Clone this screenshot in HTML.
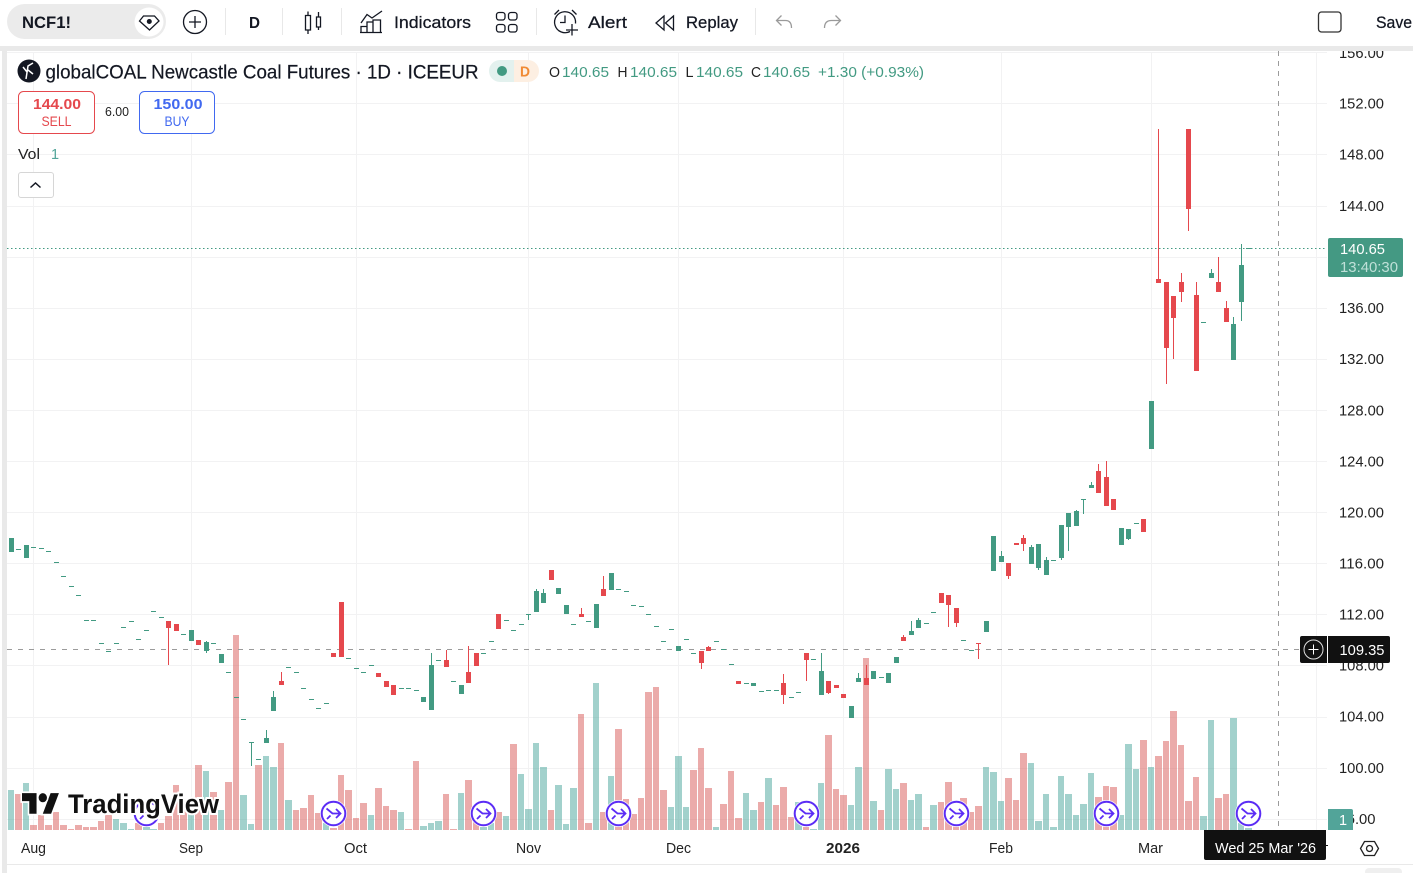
<!DOCTYPE html>
<html lang="en"><head><meta charset="utf-8"><title>NCF1! chart</title>
<style>
html,body{margin:0;padding:0;background:#fff;width:1413px;height:873px;overflow:hidden}
svg{display:block;font-family:"Liberation Sans",sans-serif}
.c{shape-rendering:crispEdges}
.t{fill:#131722;font-size:16.5px;stroke:#131722;stroke-width:.25px}
.p{fill:#222;font-size:14.5px}
.a{fill:#222;font-size:14.5px}
.g{fill:#429a82;font-size:14.5px}
.k{fill:#222;font-size:14.5px}
.i{fill:none;stroke:#131722;stroke-width:1.3}
</style></head><body>
<svg width="1413" height="873" viewBox="0 0 1413 873" xmlns="http://www.w3.org/2000/svg">
<defs>
<clipPath id="axis"><rect x="1328" y="51" width="85" height="790"/></clipPath>
<g id="mk"><circle r="13.5" fill="#fff"/><circle r="11.8" fill="#fff" stroke="#5b2cf5" stroke-width="2"/><path d="M-7-5L-1 0H7M2.5-4.5L7 0 2.500 4.500M-6.500 5.500L-3 2" fill="none" stroke="#5b2cf5" stroke-width="1.800"/></g>
</defs>
<rect width="1413" height="873" fill="#fff"/>
<rect x="0" y="46" width="1413" height="5" fill="#e9e9e9"/>
<rect x="2" y="46" width="5" height="827" fill="#e9e9e9"/>
<path d="M1410 46v5h3v-5z" fill="#e9e9e9"/>

<!-- grid -->
<path class="c" fill="none" stroke="#f2f2f3" stroke-width="1" d="M7 52.500H1327M7 103.500H1327M7 154.500H1327M7 206.500H1327M7 257.500H1327M7 308.500H1327M7 359.500H1327M7 410.500H1327M7 461.500H1327M7 512.500H1327M7 563.500H1327M7 614.500H1327M7 665.500H1327M7 717.500H1327M7 768.500H1327M7 819.500H1327M33.500 52V830M191.500 52V830M356.500 52V830M528.500 52V830M678.500 52V830M843.500 52V830M1001.500 52V830M1151.500 52V830M1316.500 52V830"/>
<path class="c" fill="none" stroke="#e9e9e9" stroke-width="1" d="M7 864.500H1413"/>
<rect x="1365" y="868" width="37" height="8" rx="4" fill="#efefef"/>

<!-- volume teal -->
<path class="c" fill="#45a399" fill-opacity=".5" d="M8 790h6V830h-6zM23 783h6V830h-6zM113 819h6V830h-6zM120 823h7V830h-7zM128 829h6V830h-6zM143 827h7V830h-7zM150 829h7V830h-7zM188 813h6V830h-6zM203 771h6V830h-6zM218 810h6V830h-6zM240 795h7V830h-7zM248 824h6V830h-6zM263 756h6V830h-6zM270 767h7V830h-7zM285 800h7V830h-7zM323 823h6V830h-6zM368 815h6V830h-6zM398 812h6V830h-6zM420 826h7V830h-7zM428 823h6V830h-6zM435 821h7V830h-7zM458 793h6V830h-6zM480 827h7V830h-7zM488 823h6V830h-6zM503 816h6V830h-6zM518 774h6V830h-6zM525 809h7V830h-7zM533 743h6V830h-6zM540 767h7V830h-7zM555 785h7V830h-7zM563 824h6V830h-6zM570 788h7V830h-7zM593 683h6V830h-6zM608 776h6V830h-6zM668 807h6V830h-6zM675 756h7V830h-7zM683 807h6V830h-6zM713 827h6V830h-6zM743 793h6V830h-6zM750 810h7V830h-7zM765 778h7V830h-7zM795 802h7V830h-7zM810 829h7V830h-7zM818 783h6V830h-6zM848 805h6V830h-6zM855 767h7V830h-7zM870 801h7V830h-7zM885 769h7V830h-7zM893 789h6V830h-6zM908 800h6V830h-6zM915 794h7V830h-7zM930 805h7V830h-7zM983 767h6V830h-6zM990 772h7V830h-7zM998 801h6V830h-6zM1028 763h6V830h-6zM1035 821h7V830h-7zM1043 794h6V830h-6zM1050 827h7V830h-7zM1058 776h6V830h-6zM1065 794h7V830h-7zM1073 815h6V830h-6zM1080 804h7V830h-7zM1088 773h6V830h-6zM1118 815h6V830h-6zM1125 744h7V830h-7zM1133 769h6V830h-6zM1148 767h6V830h-6zM1200 816h7V830h-7zM1208 720h6V830h-6zM1230 718h7V830h-7zM1238 823h6V830h-6zM1245 828h7V830h-7z"/>
<!-- volume pink -->
<path class="c" fill="#d75755" fill-opacity=".5" d="M15 794h7V830h-7zM30 825h7V830h-7zM38 815h6V830h-6zM45 825h7V830h-7zM53 812h6V830h-6zM60 825h7V830h-7zM68 829h6V830h-6zM75 825h7V830h-7zM83 827h6V830h-6zM90 827h7V830h-7zM98 821h6V830h-6zM105 815h7V830h-7zM135 823h7V830h-7zM158 823h6V830h-6zM165 816h7V830h-7zM173 785h6V830h-6zM180 810h7V830h-7zM195 765h7V830h-7zM210 792h7V830h-7zM225 782h7V830h-7zM233 635h6V830h-6zM255 765h7V830h-7zM278 743h6V830h-6zM293 810h6V830h-6zM300 808h7V830h-7zM308 795h6V830h-6zM315 813h7V830h-7zM330 828h7V830h-7zM338 775h6V830h-6zM345 790h7V830h-7zM353 818h6V830h-6zM360 803h7V830h-7zM375 788h7V830h-7zM383 806h6V830h-6zM390 810h7V830h-7zM405 829h7V830h-7zM413 761h6V830h-6zM443 794h6V830h-6zM450 829h7V830h-7zM465 780h7V830h-7zM473 817h6V830h-6zM495 812h7V830h-7zM510 744h7V830h-7zM548 810h6V830h-6zM578 714h6V830h-6zM585 823h7V830h-7zM600 812h7V830h-7zM615 729h7V830h-7zM623 799h6V830h-6zM630 814h7V830h-7zM638 798h6V830h-6zM645 692h7V830h-7zM653 687h6V830h-6zM660 790h7V830h-7zM690 770h7V830h-7zM698 748h6V830h-6zM705 788h7V830h-7zM720 804h7V830h-7zM728 771h6V830h-6zM735 818h7V830h-7zM758 802h6V830h-6zM773 805h6V830h-6zM780 787h7V830h-7zM788 817h6V830h-6zM803 827h6V830h-6zM825 735h7V830h-7zM833 789h6V830h-6zM840 795h7V830h-7zM863 658h6V830h-6zM878 810h6V830h-6zM900 783h7V830h-7zM923 827h6V830h-6zM938 802h6V830h-6zM945 782h7V830h-7zM953 823h6V830h-6zM960 798h7V830h-7zM968 812h6V830h-6zM975 806h7V830h-7zM1005 778h7V830h-7zM1013 800h6V830h-6zM1020 753h7V830h-7zM1095 797h7V830h-7zM1103 786h6V830h-6zM1110 787h7V830h-7zM1140 740h7V830h-7zM1155 756h7V830h-7zM1163 741h6V830h-6zM1170 711h7V830h-7zM1178 745h6V830h-6zM1185 801h7V830h-7zM1193 777h6V830h-6zM1215 798h7V830h-7zM1223 794h6V830h-6z"/>

<!-- price line and crosshair -->
<path d="M7 248.500H1327" fill="none" stroke="#429a82" stroke-width="1" stroke-dasharray="1.500 2.500"/>
<path d="M7 649.500H1300" fill="none" stroke="#9b9b9b" stroke-width="1" stroke-dasharray="5 6" class="c"/>
<path d="M1278.500 51V830" fill="none" stroke="#9b9b9b" stroke-width="1" stroke-dasharray="5 5" class="c"/>

<!-- candles -->
<path class="c" fill="none" stroke="#429a82" stroke-width="5" d="M11.500 538V552M26.500 545V558M191.500 630V641M206.500 642V651M221.500 654V663M266.500 738V743M273.500 697V711M423.500 697V702M431.500 665V710M461.500 685V694M536.500 591V612M543.500 593V603M558.500 588V594M566.500 605V614M596.500 604V628M611.500 573V590M678.500 646V651M753.500 683V686M821.500 671V695M851.500 706V718M858.500 678V682M873.500 671V679M888.500 673V683M896.500 657V663M911.500 631V635M918.500 620V628M986.500 621V632M993.500 536V571M1001.500 556V562M1031.500 547V564M1038.500 544V568M1046.500 560V575M1061.500 525V558M1068.500 513V527M1076.500 511V526M1091.500 485V488M1121.500 528V545M1128.500 529V539M1151.500 401V449M1211.500 273V278M1233.500 324V360M1241.500 265V302"/>
<path class="c" fill="none" stroke="#429a82" stroke-width="1" d="M16 549.500h5M31 547.500h5M39 548.500h5M46 551.500h5M54 562.500h5M61 576.500h5M69 586.500h5M76 595.500h5M84 620.500h5M91 620.500h5M99 643.500h5M106 651.500h5M114 643.500h5M121 627.500h5M129 621.500h5M136 639.500h5M144 630.500h5M151 611.500h5M159 617.500h5M181 634.500h5M211 643.500h5M226 672.500h5M234 697.500h5M241 719.500h5M249 742.500h5M251.500 742V766M256 759.500h5M286 667.500h5M294 672.500h5M301 688.500h5M309 699.500h5M316 708.500h5M324 703.500h5M346 658.500h5M354 668.500h5M361 672.500h5M369 665.500h5M399 688.500h5M406 688.500h5M414 690.500h5M436 660.500h5M451 681.500h5M481 653.500h5M489 641.500h5M504 620.500h5M511 630.500h5M519 624.500h5M526 614.500h5M528.500 614V620M571 624.500h5M586 621.500h5M616 589.500h5M624 591.500h5M631 605.500h5M639 606.500h5M646 614.500h5M654 626.500h5M661 641.500h5M669 629.500h5M684 639.500h5M691 653.500h5M714 641.500h5M721 649.500h5M729 664.500h5M744 683.500h5M759 691.500h5M766 690.500h5M774 690.500h5M789 697.500h5M796 692.500h5M811 659.500h5M879 677.500h5M924 623.500h5M931 612.500h5M961 640.500h5M969 650.500h5M1051 560.500h5M1081 499.500h5M1083.500 499V514M1134 523.500h5M1201 322.500h5M1246 248.500h5M206.500 641V653M266.500 730V738M273.500 691V697M431.500 653V665M536.500 589V591M543.500 589V593M821.500 653V671M858.500 673V678M911.500 621V631M918.500 618V620M1001.500 551V556M1031.500 545V547M1038.500 568V570M1046.500 557V560M1061.500 558V560M1068.500 527V551M1076.500 510V511M1091.500 482V485M1128.500 539V540M1211.500 269V273M1233.500 317V324M1241.500 244V321"/>
<path class="c" fill="none" stroke="#e5484d" stroke-width="5" d="M168.500 621V628M176.500 624V631M198.500 640V645M281.500 681V685M333.500 653V657M341.500 602V657M378.500 673V677M386.500 681V687M393.500 685V695M446.500 660V667M468.500 672V683M476.500 653V666M498.500 614V629M551.500 570V580M581.500 614V617M603.500 589V596M701.500 651V663M708.500 647V651M738.500 681V684M783.500 683V695M806.500 653V660M828.500 681V693M836.500 685V688M843.500 694V698M866.500 678V685M903.500 637V641M941.500 593V603M948.500 595V605M956.500 608V623M1008.500 563V576M1016.500 543V545M1023.500 538V544M1098.500 471V493M1106.500 477V506M1113.500 499V510M1143.500 519V532M1158.500 279V283M1166.500 282V348M1173.500 296V318M1181.500 282V292M1188.500 129V209M1196.500 295V371M1218.500 282V292M1226.500 308V322"/>
<path class="c" fill="none" stroke="#e5484d" stroke-width="1" d="M168.500 628V665M281.500 672V681M446.500 650V660M468.500 646V672M581.500 608V614M603.500 576V589M701.500 663V669M708.500 646V647M783.500 674V704M806.500 660V681M828.500 693V694M866.500 665V678M903.500 635V637M948.500 605V627M956.500 623V627M976 643.500h5M978.500 643V659M1008.500 576V579M1023.500 535V551M1098.500 464V471M1106.500 461V477M1158.500 129V279M1166.500 348V384M1173.500 318V359M1181.500 273V302M1188.500 209V231M1196.500 282V295M1218.500 257V282M1226.500 301V308"/>

<!-- event markers -->
<use href="#mk" x="146.500" y="813.500"/>
<use href="#mk" x="333.500" y="813.500"/>
<use href="#mk" x="483.500" y="813.500"/>
<use href="#mk" x="618.500" y="813.500"/>
<use href="#mk" x="806.500" y="813.500"/>
<use href="#mk" x="956.500" y="813.500"/>
<use href="#mk" x="1106.500" y="813.500"/>
<use href="#mk" x="1248.500" y="813.500"/>

<!-- watermark -->
<g transform="translate(22 788.500) scale(1.040 1.150)"><path d="M14 22H7V11H0V4h14v18zM28 22h-8l7.500-18h8L28 22z" fill="#111" stroke="#fff" stroke-width="3" paint-order="stroke"/><circle cx="20" cy="8" r="4" fill="#111" stroke="#fff" stroke-width="3" paint-order="stroke"/></g>
<text x="68" y="813" font-size="27" font-weight="700" fill="#111" stroke="#fff" stroke-width="4" paint-order="stroke" textLength="151" lengthAdjust="spacingAndGlyphs">TradingView</text>

<!-- price axis -->
<g clip-path="url(#axis)" class="p">
<text x="1339" y="58" textLength="45" lengthAdjust="spacingAndGlyphs">156.00</text>
<text x="1339" y="108.500" textLength="45" lengthAdjust="spacingAndGlyphs">152.00</text>
<text x="1339" y="159.500" textLength="45" lengthAdjust="spacingAndGlyphs">148.00</text>
<text x="1339" y="211" textLength="45" lengthAdjust="spacingAndGlyphs">144.00</text>
<text x="1339" y="313" textLength="45" lengthAdjust="spacingAndGlyphs">136.00</text>
<text x="1339" y="364" textLength="45" lengthAdjust="spacingAndGlyphs">132.00</text>
<text x="1339" y="415.500" textLength="45" lengthAdjust="spacingAndGlyphs">128.00</text>
<text x="1339" y="466.500" textLength="45" lengthAdjust="spacingAndGlyphs">124.00</text>
<text x="1339" y="517.500" textLength="45" lengthAdjust="spacingAndGlyphs">120.00</text>
<text x="1339" y="568.500" textLength="45" lengthAdjust="spacingAndGlyphs">116.00</text>
<text x="1339" y="619.500" textLength="45" lengthAdjust="spacingAndGlyphs">112.00</text>
<text x="1339" y="670.500" textLength="45" lengthAdjust="spacingAndGlyphs">108.00</text>
<text x="1339" y="721.500" textLength="45" lengthAdjust="spacingAndGlyphs">104.00</text>
<text x="1339" y="773" textLength="45" lengthAdjust="spacingAndGlyphs">100.00</text>
<text x="1338.500" y="824" textLength="37" lengthAdjust="spacingAndGlyphs">96.00</text>
</g>
<rect x="1328" y="238" width="75" height="39" rx="2" fill="#449983"/>
<text x="1340" y="254" font-size="14.500" fill="#fff" textLength="45" lengthAdjust="spacingAndGlyphs">140.65</text>
<text x="1340" y="272" font-size="14.500" fill="#bfe0d8" textLength="58" lengthAdjust="spacingAndGlyphs">13:40:30</text>
<path d="M1300 638a2 2 0 0 1 2-2h25v27h-25a2 2 0 0 1-2-2z" fill="#111"/>
<circle cx="1313.500" cy="649.500" r="9.500" fill="none" stroke="#ddd" stroke-width="1"/>
<path d="M1313.500 644.500v10M1308.500 649.500h10" stroke="#fff" stroke-width="1" fill="none"/>
<path d="M1328 636h60a2 2 0 0 1 2 2v23a2 2 0 0 1-2 2h-60z" fill="#111"/>
<text x="1339.500" y="655" font-size="14.500" fill="#fff" textLength="45" lengthAdjust="spacingAndGlyphs">109.35</text>
<path d="M1328 809h23a2 2 0 0 1 2 2v19h-25z" fill="#52a499"/>
<text x="1339" y="825" font-size="14.500" fill="#fff">1</text>

<!-- time axis -->
<g class="a">
<text x="21" y="853" textLength="25" lengthAdjust="spacingAndGlyphs">Aug</text>
<text x="179" y="853" textLength="24" lengthAdjust="spacingAndGlyphs">Sep</text>
<text x="344" y="853" textLength="23" lengthAdjust="spacingAndGlyphs">Oct</text>
<text x="516" y="853" textLength="25" lengthAdjust="spacingAndGlyphs">Nov</text>
<text x="666" y="853" textLength="25" lengthAdjust="spacingAndGlyphs">Dec</text>
<text x="826" y="853" font-weight="700" textLength="34" lengthAdjust="spacingAndGlyphs">2026</text>
<text x="989" y="853" textLength="24" lengthAdjust="spacingAndGlyphs">Feb</text>
<text x="1138" y="853" textLength="25" lengthAdjust="spacingAndGlyphs">Mar</text>
</g>
<path d="M1204 830h122v28a2 2 0 0 1-2 2h-118a2 2 0 0 1-2-2z" fill="#111"/>
<path d="M1326 845.500h2" stroke="#111" stroke-width="1"/>
<text x="1215" y="853" font-size="14.500" fill="#fff" textLength="101" lengthAdjust="spacingAndGlyphs">Wed 25 Mar '26</text>
<g fill="none" stroke="#222" stroke-width="1.300"><path d="M1360.500 848.500l4-7h10l4 7-4 7h-10z"/><circle cx="1369.500" cy="848.500" r="3"/></g>

<!-- legend -->
<circle cx="29" cy="71" r="11.500" fill="#131722"/>
<path d="M26 79l2-13 5-3M28 70l5 4M27 72l-4-5" fill="none" stroke="#fff" stroke-width="1.500"/>
<text x="45.500" y="78.500" font-size="19.500" fill="#131722" stroke="#131722" stroke-width=".2" textLength="433" lengthAdjust="spacingAndGlyphs">globalCOAL Newcastle Coal Futures · 1D · ICEEUR</text>
<path d="M514 60h-14a11 11 0 0 0 0 22h14z" fill="#e3f1ee"/>
<path d="M514 60h14a11 11 0 0 1 0 22h-14z" fill="#fdefe2"/>
<circle cx="502" cy="71" r="5" fill="#429a82"/>
<text x="520" y="76.500" font-size="14.500" font-weight="700" fill="#f08a33" textLength="10" lengthAdjust="spacingAndGlyphs">D</text>
<text class="k" x="549" y="77" textLength="11" lengthAdjust="spacingAndGlyphs">O</text>
<text class="g" x="562" y="77" textLength="47" lengthAdjust="spacingAndGlyphs">140.65</text>
<text class="k" x="617.500" y="77" textLength="10" lengthAdjust="spacingAndGlyphs">H</text>
<text class="g" x="630" y="77" textLength="47" lengthAdjust="spacingAndGlyphs">140.65</text>
<text class="k" x="685.500" y="77" textLength="8" lengthAdjust="spacingAndGlyphs">L</text>
<text class="g" x="696" y="77" textLength="47" lengthAdjust="spacingAndGlyphs">140.65</text>
<text class="k" x="751" y="77" textLength="10" lengthAdjust="spacingAndGlyphs">C</text>
<text class="g" x="763" y="77" textLength="47" lengthAdjust="spacingAndGlyphs">140.65</text>
<text class="g" x="818" y="77" textLength="106" lengthAdjust="spacingAndGlyphs">+1.30 (+0.93%)</text>

<rect x="18.500" y="91.500" width="76" height="42" rx="5" fill="#fff" stroke="#e5484d"/>
<text x="33" y="109" font-size="14.500" font-weight="700" fill="#e5484d" textLength="48" lengthAdjust="spacingAndGlyphs">144.00</text>
<text x="41.500" y="126" font-size="13.500" fill="#e5484d" textLength="30" lengthAdjust="spacingAndGlyphs">SELL</text>
<text x="105" y="116" font-size="12.500" fill="#222" textLength="24" lengthAdjust="spacingAndGlyphs">6.00</text>
<rect x="139.500" y="91.500" width="75" height="42" rx="5" fill="#fff" stroke="#4169f0"/>
<text x="153.500" y="109" font-size="14.500" font-weight="700" fill="#4169f0" textLength="49" lengthAdjust="spacingAndGlyphs">150.00</text>
<text x="164.500" y="126" font-size="13.500" fill="#4169f0" textLength="25" lengthAdjust="spacingAndGlyphs">BUY</text>
<text x="18" y="159" font-size="14.500" fill="#222" textLength="22" lengthAdjust="spacingAndGlyphs">Vol</text>
<text x="51" y="159" font-size="14.500" fill="#52a499">1</text>
<rect x="18.500" y="172.500" width="35" height="25" rx="2.500" fill="#fff" stroke="#d6d6d6"/>
<path d="M30.500 187.500l5-4.500 5 4.500" fill="none" stroke="#131722" stroke-width="1.500"/>

<!-- toolbar -->
<rect x="7" y="4" width="159" height="35" rx="17.500" fill="#ebebeb"/>
<circle cx="149" cy="22" r="14.500" fill="#fff"/>
<path d="M143.500 16h11l4.500 5-9.500 9-10-9z" class="i"/>
<circle cx="149.300" cy="21.500" r="2.500" fill="#131722"/>
<text x="22" y="28" font-size="16.500" font-weight="700" fill="#131722" textLength="49" lengthAdjust="spacingAndGlyphs">NCF1!</text>
<circle cx="195" cy="22" r="11.500" class="i"/>
<path d="M189 22h12M195 16v12" class="i"/>
<path class="c" fill="none" stroke="#e8e8e8" d="M225.500 8V35M282.500 8V35M341.500 8V35M536.500 8V35M755.500 8V35"/>
<text x="249" y="28" font-size="16" font-weight="700" fill="#131722" textLength="11" lengthAdjust="spacingAndGlyphs">D</text>
<path d="M305.500 15.500h5v14.500h-5zM308 11.500v4M308 30v4M316.500 17h4v10h-4zM318.500 12v5M318.500 27v3" class="i"/>
<path d="M361 23l6-8.500 5 3.500 10-7M361 32.500V26.500h6v6zM367 32.500V22h6v10.500zM373 32.500V20h7.500v12.500zM360 32.500h22" class="i"/>
<text class="t" x="394" y="28" textLength="77" lengthAdjust="spacingAndGlyphs">Indicators</text>
<rect x="496.500" y="12.500" width="8.500" height="7.500" rx="2.500" class="i"/><rect x="508.500" y="12.500" width="8.500" height="7.500" rx="2.500" class="i"/>
<rect x="496.500" y="24.500" width="8.500" height="7.500" rx="2.500" class="i"/><rect x="508.500" y="24.500" width="8.500" height="7.500" rx="2.500" class="i"/>
<path d="M570 31.500a10.500 10.500 0 1 1 5.500-8M565 15.500v7h-5M554.500 14.500l4.500-4.500M576.500 14.500l-4.500-4.500M572 24v11.500M566 30h12" class="i"/>
<text class="t" x="588" y="28" textLength="39" lengthAdjust="spacingAndGlyphs">Alert</text>
<path d="M664 16l-8 7 8 7zM673.500 16l-8 7 8 7z" class="i"/>
<text class="t" x="686" y="28" textLength="52" lengthAdjust="spacingAndGlyphs">Replay</text>
<path d="M781.500 15.500l-5 5 5 5M776.500 20.500h9q6 0 6 7.500M835.500 15.500l5 5-5 5M840.500 20.500h-9q-7 0-7 7.500" fill="none" stroke="#9a9a9a" stroke-width="1.300"/>
<rect x="1318.500" y="12" width="22.500" height="20" rx="3" fill="#fff" stroke="#333" stroke-width="1.300"/>
<text class="t" x="1376" y="28" textLength="36" lengthAdjust="spacingAndGlyphs">Save</text>
</svg>
</body></html>
